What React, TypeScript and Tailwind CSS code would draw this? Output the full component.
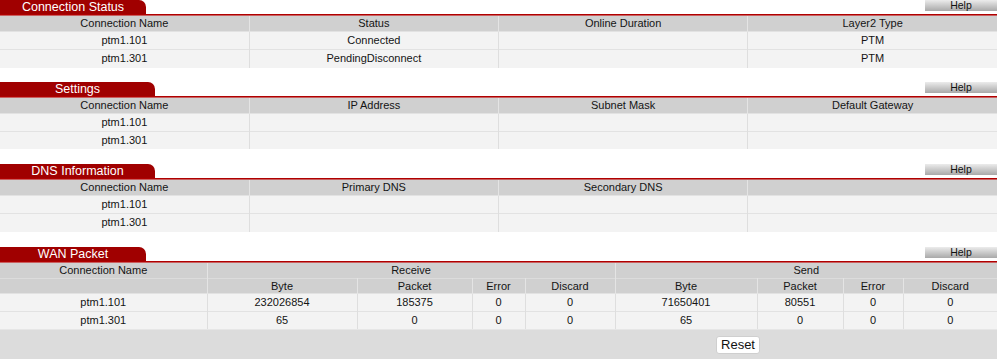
import React from "react";

const font = { fontFamily: '"Liberation Sans", Arial, Helvetica, sans-serif' };

const SectionHead = ({ title, tabWidth }: { title: string; tabWidth: string }) => {
  return (
    <div className="w-full">
      <div className="flex items-end justify-between h-[14px]">
        <div
          className={`${tabWidth} h-[14px] bg-[#a00000] rounded-tr-[7px] text-white text-[12.5px] leading-[14px] text-center`}
        >
          {title}
        </div>
        <div className="self-start w-[72px] h-[11px] bg-gradient-to-b from-[#ececec] to-[#a9a9a9] text-[10.5px] leading-[11px] text-center text-[#111]">
          Help
        </div>
      </div>
      <div className="h-[2px] w-full bg-[#b00000] border-b border-[#c86060]"></div>
    </div>
  );
};

const SimpleTable = ({ headers, rows }: { headers: string[]; rows: string[][] }) => {
  return (
    <table className="w-full table-fixed border-collapse text-[11px] text-[#141414]">
      <thead>
        <tr className="h-[15px] bg-[#d0d0d0]">
          {headers.map((h, i) => (
            <th
              key={i}
              className="font-normal leading-[15px] p-0 border-l border-[#e4e4e4] first:border-l-0"
            >
              {h}
            </th>
          ))}
        </tr>
      </thead>
      <tbody>
        {rows.map((r, i) => (
          <tr key={i} className="h-[18px] bg-[#f3f3f3] border-t border-[#e2e2e2]">
            {r.map((c, j) => (
              <td
                key={j}
                className="text-center p-0 leading-[17px] border-l border-[#dedede] first:border-l-0"
              >
                {c}
              </td>
            ))}
          </tr>
        ))}
      </tbody>
    </table>
  );
};

const wanCols = [207, 150, 115, 53, 90, 142, 86, 60, 94];

const wanRows = [
  ["ptm1.101", "232026854", "185375", "0", "0", "71650401", "80551", "0", "0"],
  ["ptm1.301", "65", "0", "0", "0", "65", "0", "0", "0"],
];

export default function App() {
  return (
    <div className="w-[997px] bg-white" style={font}>
      <SectionHead title="Connection Status" tabWidth="w-[146px]" />
      <SimpleTable
        headers={["Connection Name", "Status", "Online Duration", "Layer2 Type"]}
        rows={[
          ["ptm1.101", "Connected", "", "PTM"],
          ["ptm1.301", "PendingDisconnect", "", "PTM"],
        ]}
      />

      <div className="h-[14px]"></div>
      <SectionHead title="Settings" tabWidth="w-[155px]" />
      <SimpleTable
        headers={["Connection Name", "IP Address", "Subnet Mask", "Default Gateway"]}
        rows={[
          ["ptm1.101", "", "", ""],
          ["ptm1.301", "", "", ""],
        ]}
      />

      <div className="h-[15px]"></div>
      <SectionHead title="DNS Information" tabWidth="w-[155px]" />
      <SimpleTable
        headers={["Connection Name", "Primary DNS", "Secondary DNS", ""]}
        rows={[
          ["ptm1.101", "", "", ""],
          ["ptm1.301", "", "", ""],
        ]}
      />

      <div className="h-[15px]"></div>
      <SectionHead title="WAN Packet" tabWidth="w-[146px]" />
      <table className="w-full table-fixed border-collapse text-[11px] text-[#141414]">
        <colgroup>
          {wanCols.map((w, i) => (
            <col key={i} style={{ width: w }} />
          ))}
        </colgroup>
        <thead>
          <tr className="h-[15px] bg-[#d0d0d0]">
            <th className="font-normal p-0 leading-[15px]">Connection Name</th>
            <th colSpan={4} className="font-normal p-0 leading-[15px] border-l border-[#e4e4e4]">
              Receive
            </th>
            <th colSpan={4} className="font-normal p-0 leading-[15px] border-l border-[#e4e4e4]">
              Send
            </th>
          </tr>
          <tr className="h-[15px] bg-[#d0d0d0] border-t border-[#dcdcdc]">
            {["", "Byte", "Packet", "Error", "Discard", "Byte", "Packet", "Error", "Discard"].map(
              (h, i) => (
                <th
                  key={i}
                  className="font-normal p-0 leading-[14px] border-l border-[#e4e4e4] first:border-l-0"
                >
                  {h}
                </th>
              )
            )}
          </tr>
        </thead>
        <tbody>
          {wanRows.map((r, i) => (
            <tr key={i} className="h-[18px] bg-[#f3f3f3] border-t border-[#e2e2e2]">
              {r.map((c, j) => (
                <td
                  key={j}
                  className="text-center p-0 leading-[17px] border-l border-[#dedede] first:border-l-0"
                >
                  {c}
                </td>
              ))}
            </tr>
          ))}
        </tbody>
      </table>
      <div className="h-[30px] bg-[#dcdcdc] border-t border-[#e6e6e6] flex items-center">
        <button
          type="button"
          className="ml-[716px] h-[18px] w-[44px] bg-white rounded-[3px] border border-[#cfcfcf] text-[13px] leading-[16px] text-[#111]"
        >
          Reset
        </button>
      </div>
    </div>
  );
}
